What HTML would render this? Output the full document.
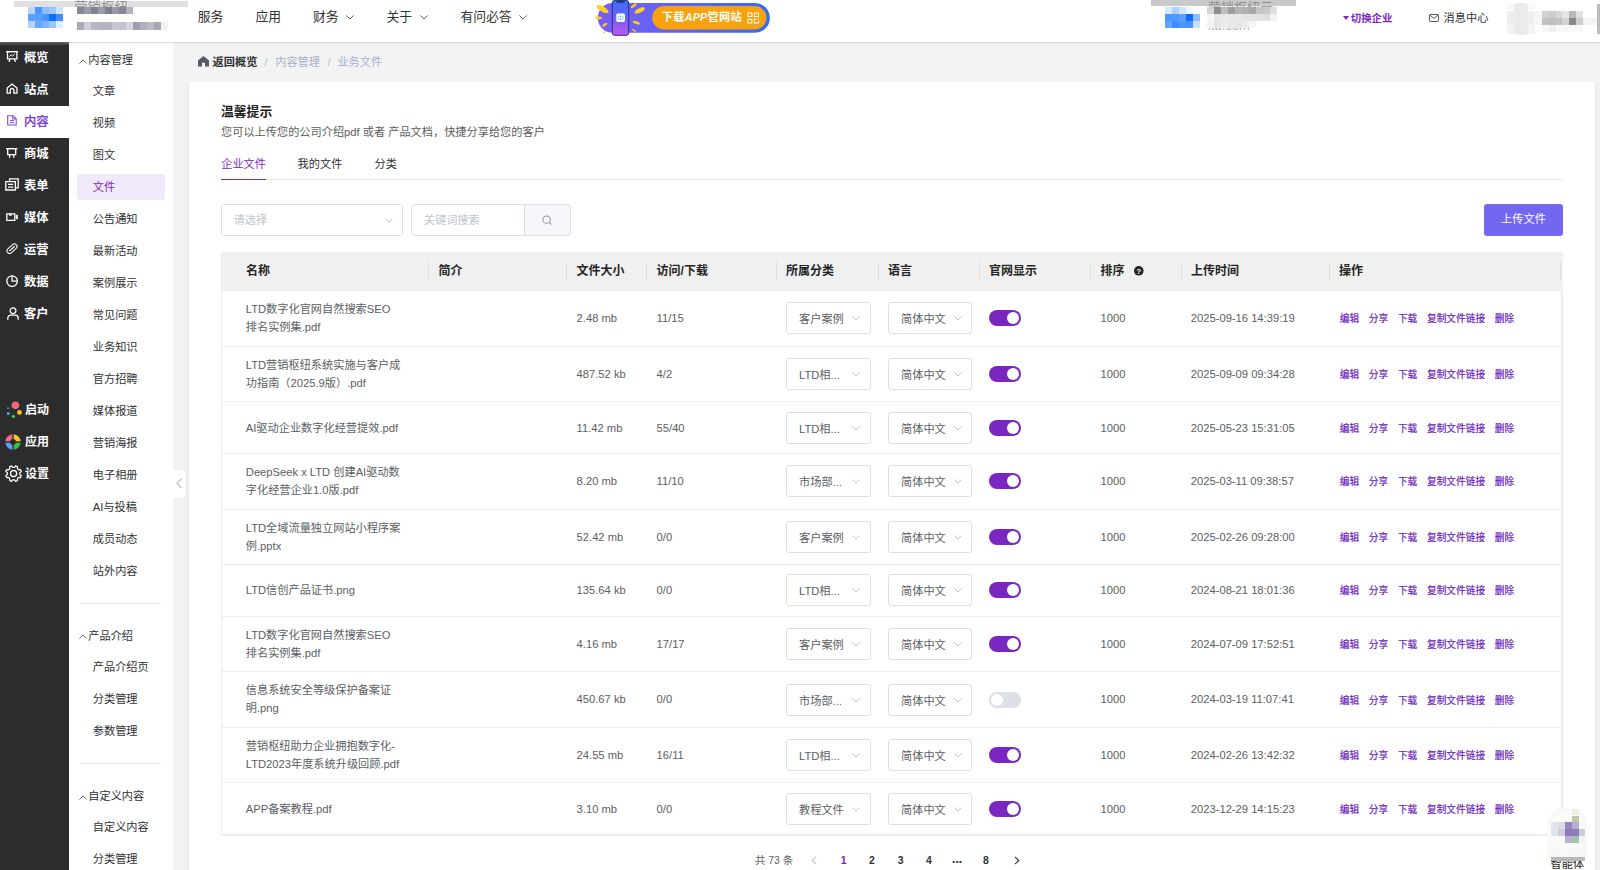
<!DOCTYPE html><html lang="zh-CN"><head><meta charset="utf-8"><title>业务文件</title><style>
*{box-sizing:border-box;margin:0;padding:0}
html,body{width:1600px;height:870px;overflow:hidden;background:#f3f3f3}
body{font-family:"Liberation Sans","Noto Sans CJK SC",sans-serif;font-size:11.2px;color:#5b5e64;position:relative}
.a{position:absolute;white-space:nowrap}
#hdr{position:absolute;left:0;top:0;width:1600px;height:41.6px;background:#fff;box-shadow:0 2px 3px rgba(0,0,0,.03);z-index:5}
#hdr .nav{position:absolute;top:7px;height:20px;line-height:20px;font-size:12.8px;color:#303133;white-space:nowrap}
#side{position:absolute;left:0;top:41.6px;width:68.8px;height:830px;background:#2c2c2c;z-index:3}
#side .it{position:absolute;left:0;width:68.8px;height:32px;line-height:33.4px;color:#fff;font-weight:bold;font-size:12.3px;white-space:nowrap}
#side .it span{position:absolute;left:24px;top:0}
#side .it.on{background:#fff;color:#7434da;font-weight:normal;-webkit-text-stroke:0.35px #7434da}
#side .it svg{position:absolute}
#sub{position:absolute;left:68.8px;top:41.6px;width:104px;height:830px;background:#fff;z-index:2}
#sub .g,#sub .i{position:absolute;white-space:nowrap;color:#303133;font-size:11.2px;line-height:16px;height:16px}
#sub .i{left:24px}
#sub .g{left:19.5px}
#sub .on{color:#7a27c2}
#sub .hl{position:absolute;left:8.2px;width:88px;height:26px;background:#f0e9fa;border-radius:3px}
#sub .dv{position:absolute;left:12px;width:80px;height:1px;background:#e6eaf0}
#card{position:absolute;left:189px;top:82px;width:1406.4px;height:800px;background:#fff;border-radius:3px;box-shadow:0 0 9px rgba(0,0,0,.075)}
.t{position:absolute;white-space:nowrap;line-height:16px;height:16px}
.hd{position:absolute;left:221px;top:252.3px;width:1342px;height:37.9px;background:#f0f0f0}
.hd .t{color:#252525;font-weight:bold;top:11px;font-size:12px}
.hd i{position:absolute;top:9.7px;width:1px;height:19px;background:#dddddd}
.nm{position:absolute;line-height:17.7px;white-space:nowrap;color:#5b5e64}
.c{position:absolute;white-space:nowrap;line-height:16px;height:16px}
.sel{position:absolute;height:32px;width:84px;border:1px solid #dcdfe6;border-radius:3px;background:#fff}
.sel span{position:absolute;left:12px;top:7.5px;line-height:16px;white-space:nowrap}
.sel svg{position:absolute;right:9.4px;top:13px}
.sw{position:absolute;left:989px;width:32px;height:16px;border-radius:8px;background:#7a27c2}
.sw b{position:absolute;right:1.6px;top:1.6px;width:12.8px;height:12.8px;border-radius:50%;background:#fff}
.sw.off{background:#dcdfe6}
.sw.off b{right:auto;left:1.6px}
.lk{position:absolute;left:1339.8px;-webkit-text-stroke:0.2px #6c1fc0;line-height:16px;height:16px;font-size:9.7px;color:#6c1fc0;white-space:nowrap}
.lk span{margin-right:9.7px}
.pg{position:absolute;top:852.8px;line-height:16px;height:16px;font-size:10.4px;font-weight:bold;color:#303133;white-space:nowrap}
</style></head><body>
<div id="hdr"><div class="a" style="left:14px;top:1px;width:174px;height:6px;background:#e0e0e0"></div>
<div class="a" style="left:74px;top:0;width:60px;height:7px;overflow:hidden"><div class="a" style="left:0;top:-0.5px;font-size:13.5px;line-height:16px;color:rgba(70,70,70,.5)">营销枢纽</div></div>
<div class="a" style="left:27.5px;top:7px;width:7px;height:7px;background:#b9d6ff"></div>
<div class="a" style="left:34.5px;top:7px;width:7px;height:7px;background:#4a95ff"></div>
<div class="a" style="left:41.5px;top:7px;width:7px;height:7px;background:#8dbcff"></div>
<div class="a" style="left:48.5px;top:7px;width:7px;height:7px;background:#9cc6ff"></div>
<div class="a" style="left:55.5px;top:7px;width:7px;height:7px;background:#cfe2ff"></div>
<div class="a" style="left:27.5px;top:14px;width:7px;height:7px;background:#5aa0ff"></div>
<div class="a" style="left:34.5px;top:14px;width:7px;height:7px;background:#58a0ff"></div>
<div class="a" style="left:41.5px;top:14px;width:7px;height:7px;background:#4a94ff"></div>
<div class="a" style="left:48.5px;top:14px;width:7px;height:7px;background:#0d6dff"></div>
<div class="a" style="left:55.5px;top:14px;width:7px;height:7px;background:#3f8dff"></div>
<div class="a" style="left:27.5px;top:21px;width:7px;height:7px;background:#b5d3ff"></div>
<div class="a" style="left:34.5px;top:21px;width:7px;height:7px;background:#66a6ff"></div>
<div class="a" style="left:41.5px;top:21px;width:7px;height:7px;background:#7db3ff"></div>
<div class="a" style="left:48.5px;top:21px;width:7px;height:7px;background:#9cc5ff"></div>
<div class="a" style="left:55.5px;top:21px;width:7px;height:7px;background:#e2eeff"></div>
<div class="a" style="left:76.5px;top:7px;width:7px;height:7px;background:#838896"></div>
<div class="a" style="left:83.5px;top:7px;width:7px;height:7px;background:#9a9da8"></div>
<div class="a" style="left:90.5px;top:7px;width:7px;height:7px;background:#80838f"></div>
<div class="a" style="left:97.5px;top:7px;width:7px;height:7px;background:#9b9ea9"></div>
<div class="a" style="left:104.5px;top:7px;width:7px;height:7px;background:#7e818d"></div>
<div class="a" style="left:111.5px;top:7px;width:7px;height:7px;background:#989ba6"></div>
<div class="a" style="left:118.5px;top:7px;width:7px;height:7px;background:#858894"></div>
<div class="a" style="left:125.5px;top:7px;width:7px;height:7px;background:#b0b2ba"></div>
<div class="a" style="left:76.5px;top:22px;width:7px;height:8px;background:#a9a9b7"></div>
<div class="a" style="left:83.5px;top:22px;width:7px;height:8px;background:#cfcfd7"></div>
<div class="a" style="left:90.5px;top:22px;width:7px;height:8px;background:#b9b8c6"></div>
<div class="a" style="left:97.5px;top:22px;width:7px;height:8px;background:#b5b4c2"></div>
<div class="a" style="left:104.5px;top:22px;width:7px;height:8px;background:#b3b2c0"></div>
<div class="a" style="left:111.5px;top:22px;width:7px;height:8px;background:#c6c5d0"></div>
<div class="a" style="left:118.5px;top:22px;width:7px;height:8px;background:#c2c1cd"></div>
<div class="a" style="left:125.5px;top:22px;width:7px;height:8px;background:#d6d5de"></div>
<div class="a" style="left:132.5px;top:22px;width:7px;height:8px;background:#9f9eb0"></div>
<div class="a" style="left:139.5px;top:22px;width:7px;height:8px;background:#b1b0bf"></div>
<div class="a" style="left:146.5px;top:22px;width:7px;height:8px;background:#bbbac7"></div>
<div class="a" style="left:153.5px;top:22px;width:7px;height:8px;background:#a7a6b7"></div>
<div class="a" style="left:160.5px;top:22px;width:7px;height:8px;background:#f1f1f4"></div>
<div class="nav" style="left:197.8px">服务</div>
<div class="nav" style="left:255.5px">应用</div>
<div class="nav" style="left:312.9px">财务<span style="display:inline-block;position:relative;left:7.5px;top:-1.4px"><svg style="display:block;" width="8" height="5" viewBox="0 0 8 5" fill="none" stroke="#606266" stroke-width="1" stroke-linecap="round" stroke-linejoin="round"><path d="M0.7 0.7 L4 4 L7.3 0.7"/></svg></span></div>
<div class="nav" style="left:386.5px">关于<span style="display:inline-block;position:relative;left:7.5px;top:-1.4px"><svg style="display:block;" width="8" height="5" viewBox="0 0 8 5" fill="none" stroke="#606266" stroke-width="1" stroke-linecap="round" stroke-linejoin="round"><path d="M0.7 0.7 L4 4 L7.3 0.7"/></svg></span></div>
<div class="nav" style="left:460.4px">有问必答<span style="display:inline-block;position:relative;left:7.5px;top:-1.4px"><svg style="display:block;" width="8" height="5" viewBox="0 0 8 5" fill="none" stroke="#606266" stroke-width="1" stroke-linecap="round" stroke-linejoin="round"><path d="M0.7 0.7 L4 4 L7.3 0.7"/></svg></span></div>
<svg class="a" style="left:594px;top:0" width="180" height="40" viewBox="0 0 180 40"><defs><linearGradient id="bg1" x1="0" x2="1" y1="0" y2="0"><stop offset="0" stop-color="#7b5cf5"/><stop offset="0.45" stop-color="#5f63f6"/><stop offset="1" stop-color="#2f6df6"/></linearGradient><linearGradient id="ph" x1="0" x2="0" y1="0" y2="1"><stop offset="0" stop-color="#3a6ff8"/><stop offset="0.5" stop-color="#6a62f7"/><stop offset="1" stop-color="#c054f6"/></linearGradient></defs><rect x="3.8" y="3" width="172" height="29.8" rx="14.9" fill="url(#bg1)"/><rect x="58.2" y="6.1" width="114.2" height="23.3" rx="11.65" fill="#f9a20e"/><ellipse cx="8.5" cy="9" rx="6.8" ry="2.6" transform="rotate(30 8.5 9)" fill="#ffd21a"/><ellipse cx="4.4" cy="17.9" rx="3.6" ry="1.3" transform="rotate(5 4.4 17.9)" fill="#ffd21a"/><ellipse cx="10.7" cy="24.8" rx="3" ry="1.2" transform="rotate(-30 10.7 24.8)" fill="#ffd21a"/><ellipse cx="10" cy="32.5" rx="1.6" ry="0.6" transform="rotate(-45 10 32.5)" fill="#ffd21a"/><ellipse cx="39.8" cy="5.8" rx="3.4" ry="1.2" transform="rotate(-35 39.8 5.8)" fill="#ffd21a"/><ellipse cx="45.7" cy="10.4" rx="5.6" ry="2.2" transform="rotate(-25 45.7 10.4)" fill="#ffd21a"/><ellipse cx="42.3" cy="22.6" rx="3.8" ry="1.4" transform="rotate(20 42.3 22.6)" fill="#ffd21a"/><ellipse cx="40" cy="30.4" rx="2.3" ry="0.8" transform="rotate(30 40 30.4)" fill="#ffd21a"/><rect x="18.3" y="0.4" width="16.4" height="34.9" rx="2.6" fill="url(#ph)" stroke="#27327f" stroke-width="1"/><path d="M22.5 0.8H30.5V1.6Q30.5 2.8 29.3 2.8H23.7Q22.5 2.8 22.5 1.6Z" fill="#27327f"/><rect x="22.3" y="13.6" width="8.6" height="8.4" rx="1.4" fill="#fff"/><rect x="24" y="16.2" width="5.2" height="3.2" rx="0.8" fill="none" stroke="#5aa7f5" stroke-width="0.6"/><path d="M26.6 16.2V19.4" stroke="#5aa7f5" stroke-width="0.6"/><text x="67.8" y="21.4" font-family="Liberation Sans,Noto Sans CJK SC,sans-serif" font-size="11.2" font-weight="bold" fill="#fff" letter-spacing="0.3">下载<tspan font-style="italic" font-size="10.6">APP</tspan>管网站</text><g fill="none" stroke="#fff" stroke-width="1"><rect x="153.9" y="13" width="4" height="3.6"/><rect x="160.4" y="13" width="4" height="3.6"/><rect x="153.9" y="19.4" width="4" height="3.6"/><path d="M160 19.2H162.2M163.6 19.2H165M160.4 19V23.2M160 22.9H165M164.6 21V23.2"/></g></svg>
<div class="a" style="left:1208px;top:18.6px;font-size:13px;color:#b4b4b4;line-height:14px">ltd.com</div>
<div class="a" style="left:1151px;top:0;width:145px;height:6px;background:#c9c9c9"></div>
<div class="a" style="left:1208px;top:0;width:70px;height:6.5px;overflow:hidden"><div class="a" style="left:0;top:-0.5px;font-size:13px;line-height:16px;color:rgba(60,60,60,.45)">营销枢纽云</div></div>
<div class="a" style="left:1164.5px;top:6.5px;width:7px;height:7px;background:#d9e8ff"></div>
<div class="a" style="left:1171.5px;top:6.5px;width:7px;height:7px;background:#aecfff"></div>
<div class="a" style="left:1178.5px;top:6.5px;width:7px;height:7px;background:#d3e4ff"></div>
<div class="a" style="left:1185.5px;top:6.5px;width:7px;height:7px;background:#eef5ff"></div>
<div class="a" style="left:1192.5px;top:6.5px;width:7px;height:7px;background:#ffffff"></div>
<div class="a" style="left:1164.5px;top:13.5px;width:7px;height:7px;background:#4b96ff"></div>
<div class="a" style="left:1171.5px;top:13.5px;width:7px;height:7px;background:#4f98ff"></div>
<div class="a" style="left:1178.5px;top:13.5px;width:7px;height:7px;background:#5a9fff"></div>
<div class="a" style="left:1185.5px;top:13.5px;width:7px;height:7px;background:#0d6dff"></div>
<div class="a" style="left:1192.5px;top:13.5px;width:7px;height:7px;background:#8ebcff"></div>
<div class="a" style="left:1164.5px;top:20.5px;width:7px;height:7px;background:#62a4ff"></div>
<div class="a" style="left:1171.5px;top:20.5px;width:7px;height:7px;background:#3d8dff"></div>
<div class="a" style="left:1178.5px;top:20.5px;width:7px;height:7px;background:#4e97ff"></div>
<div class="a" style="left:1185.5px;top:20.5px;width:7px;height:7px;background:#4a94ff"></div>
<div class="a" style="left:1192.5px;top:20.5px;width:7px;height:7px;background:#c8deff"></div>
<div class="a" style="left:1206.5px;top:6.5px;width:7px;height:7px;background:#d5d5d5"></div>
<div class="a" style="left:1213.5px;top:6.5px;width:7px;height:7px;background:#8d8d8d"></div>
<div class="a" style="left:1220.5px;top:6.5px;width:7px;height:7px;background:#bdbdbd"></div>
<div class="a" style="left:1227.5px;top:6.5px;width:7px;height:7px;background:#9e9e9e"></div>
<div class="a" style="left:1234.5px;top:6.5px;width:7px;height:7px;background:#b5b5b5"></div>
<div class="a" style="left:1241.5px;top:6.5px;width:7px;height:7px;background:#b0b0b0"></div>
<div class="a" style="left:1248.5px;top:6.5px;width:7px;height:7px;background:#a8a8a8"></div>
<div class="a" style="left:1255.5px;top:6.5px;width:7px;height:7px;background:#c4c4c4"></div>
<div class="a" style="left:1262.5px;top:6.5px;width:7px;height:7px;background:#c9c9c9"></div>
<div class="a" style="left:1269.5px;top:6.5px;width:7px;height:7px;background:#dedede"></div>
<div class="a" style="left:1206.5px;top:13.5px;width:7px;height:7px;background:#f6f6f6"></div>
<div class="a" style="left:1213.5px;top:13.5px;width:7px;height:7px;background:#e6e6e6"></div>
<div class="a" style="left:1220.5px;top:13.5px;width:7px;height:7px;background:#e9e9e9"></div>
<div class="a" style="left:1227.5px;top:13.5px;width:7px;height:7px;background:#e7e7e7"></div>
<div class="a" style="left:1234.5px;top:13.5px;width:7px;height:7px;background:#e8e8e8"></div>
<div class="a" style="left:1241.5px;top:13.5px;width:7px;height:7px;background:#e3e3e3"></div>
<div class="a" style="left:1248.5px;top:13.5px;width:7px;height:7px;background:#e4e4e4"></div>
<div class="a" style="left:1255.5px;top:13.5px;width:7px;height:7px;background:#e2e2e2"></div>
<div class="a" style="left:1262.5px;top:13.5px;width:7px;height:7px;background:#dfdfdf"></div>
<div class="a" style="left:1269.5px;top:13.5px;width:7px;height:7px;background:#f0f0f0"></div>
<div class="a" style="left:1206.5px;top:20.5px;width:7px;height:7px;background:#f2f2f2"></div>
<div class="a" style="left:1213.5px;top:20.5px;width:7px;height:7px;background:#e5e5e5"></div>
<div class="a" style="left:1220.5px;top:20.5px;width:7px;height:7px;background:#ebebeb"></div>
<div class="a" style="left:1227.5px;top:20.5px;width:7px;height:7px;background:#e9e9e9"></div>
<div class="a" style="left:1234.5px;top:20.5px;width:7px;height:7px;background:#e6e6e6"></div>
<div class="a" style="left:1241.5px;top:20.5px;width:7px;height:7px;background:#ececec"></div>
<div class="a" style="left:1248.5px;top:20.5px;width:7px;height:7px;background:#f5f5f5"></div>
<svg class="a" style="left:1342.6px;top:16px" width="6" height="4" viewBox="0 0 6 4"><path d="M0 0H6L3 4Z" fill="#7a27c2"/></svg>
<div class="a" style="left:1350.8px;top:10.6px;line-height:16px;font-size:10.4px;font-weight:bold;color:#7a27c2">切换企业</div>
<svg class="a" style="left:1429px;top:14px" width="10" height="8" viewBox="0 0 10 8" fill="none" stroke="#444" stroke-width="0.9"><rect x="0.5" y="0.5" width="9" height="7" rx="0.8"/><path d="M1 1.2L5 4.4L9 1.2"/></svg>
<div class="a" style="left:1443.6px;top:9.6px;line-height:16px;font-size:11.2px;color:#303133">消息中心</div>
<div class="a" style="left:1513.5px;top:3px;width:14.2px;height:31.5px;border-radius:7px/2px;background:#ebebeb"></div><div class="a" style="left:1506.8px;top:3.9px;width:7px;height:6.6px;background:#f8f8f8"></div><div class="a" style="left:1506.8px;top:10.5px;width:7px;height:14.1px;background:#eeeeee"></div><div class="a" style="left:1506.8px;top:24.6px;width:7px;height:9.4px;background:#f3f3f3"></div><div class="a" style="left:1527.5px;top:3.9px;width:7px;height:6.6px;background:#f8f8f8"></div><div class="a" style="left:1527.5px;top:10.5px;width:7px;height:14.1px;background:#eeeeee"></div><div class="a" style="left:1527.5px;top:24.6px;width:7px;height:9.4px;background:#f3f3f3"></div>
<div class="a" style="left:1534.4px;top:10.5px;width:7.2px;height:14px;background:#f6f6f6"></div>
<div class="a" style="left:1541.6px;top:10.5px;width:7px;height:7px;background:#d0d2d1"></div>
<div class="a" style="left:1548.5px;top:10.5px;width:7px;height:7px;background:#cbcbcb"></div>
<div class="a" style="left:1555.5px;top:10.5px;width:7px;height:7px;background:#d6d8d7"></div>
<div class="a" style="left:1562.4px;top:10.5px;width:7px;height:7px;background:#e6e6e6"></div>
<div class="a" style="left:1569.4px;top:10.5px;width:7px;height:7px;background:#b9b9b9"></div>
<div class="a" style="left:1576.3px;top:10.5px;width:7px;height:7px;background:#e0e0e0"></div>
<div class="a" style="left:1541.6px;top:17.5px;width:7px;height:7px;background:#c0c1c1"></div>
<div class="a" style="left:1548.5px;top:17.5px;width:7px;height:7px;background:#bfbfbf"></div>
<div class="a" style="left:1555.5px;top:17.5px;width:7px;height:7px;background:#c1c3c2"></div>
<div class="a" style="left:1562.4px;top:17.5px;width:7px;height:7px;background:#d4d4d4"></div>
<div class="a" style="left:1569.4px;top:17.5px;width:7px;height:7px;background:#87898c"></div>
<div class="a" style="left:1576.3px;top:17.5px;width:7px;height:7px;background:#cdcdcd"></div>
<div class="a" style="left:1541.6px;top:24.5px;width:7px;height:7px;background:#f6f6f6"></div>
<div class="a" style="left:1548.5px;top:24.5px;width:7px;height:7px;background:#f0f0f0"></div>
<div class="a" style="left:1555.5px;top:24.5px;width:7px;height:7px;background:#f8f8f8"></div>
<div class="a" style="left:1562.4px;top:24.5px;width:7px;height:7px;background:#f6f6f6"></div>
<div class="a" style="left:1569.4px;top:24.5px;width:7px;height:7px;background:#f8f8f8"></div>
<div class="a" style="left:1576.3px;top:24.5px;width:7px;height:7px;background:#f8f8f8"></div>
<div class="a" style="left:1583.3px;top:17.6px;width:14px;height:7px;background:#f4f4f6"></div>
<div class="a" style="left:1597.4px;top:3.8px;width:3px;height:30px;background:#bcbcbc"></div>
<div class="a" style="left:68.8px;top:42px;width:1532px;height:1px;background:rgba(190,193,205,.5)"></div></div>
<div id="side"><div class="a" style="left:0;top:0;width:68.8px;height:4px;background:linear-gradient(#66686d,#2c2c2c)"></div>
<div class="it" style="top:0.1px"><svg style="left:5.9px;top:9.2px" width="12.4" height="11.2" viewBox="0 0 12.4 11.2" fill="none" ><g stroke="#fff" stroke-width="1.3" stroke-linejoin="miter"><path d="M0 0.7H12.4" stroke-width="1.4"/><path d="M1.5 0.7V7.9H10.9V0.7"/><path d="M4 8L3 11M8.4 8L9.4 11"/><path d="M3.4 5.6L5.2 3.9L6.6 5L8.9 2.9" stroke-width="1"/></g></svg><span>概览</span></div>
<div class="it" style="top:32.1px"><svg style="left:5.8px;top:9.3px" width="12.2" height="11" viewBox="0 0 12.2 11" fill="none" ><path d="M1.2 10.2V5L6.1 1L11 5V10.2H7.9V7.2A1.8 1.8 0 0 0 4.3 7.2V10.2Z" stroke="#fff" stroke-width="1.3" stroke-linejoin="miter"/></svg><span>站点</span></div>
<div class="it on" style="top:64.1px"><svg style="left:7.1px;top:9.4px" width="10" height="10.8" viewBox="0 0 10 10.8" fill="none" ><g stroke="#8146e2" stroke-width="1.1"><path d="M0.7 0.7H6L9.2 3.8V10H0.7Z"/><path d="M5.8 0.9V4H9" /><path d="M2.8 5.6H7M2.8 7.7H7" stroke-width="1"/></g></svg><span>内容</span></div>
<div class="it" style="top:96.1px"><svg style="left:6.4px;top:10.1px" width="11.4" height="10.2" viewBox="0 0 11.4 10.2" fill="none" ><g stroke="#fff" stroke-width="1.3" stroke-linejoin="miter"><path d="M0 0.7H11.4" stroke-width="1.4"/><path d="M1.7 0.7V6.6H9.7V0.7"/><path d="M3.6 6.6V9.8M7.8 6.6V9.8" stroke-width="1.3"/></g></svg><span>商城</span></div>
<div class="it" style="top:128.1px"><svg style="left:4.9px;top:8.3px" width="14" height="12.9" viewBox="0 0 14 12.9" fill="none" ><g stroke="#fff" stroke-width="1.3" stroke-linejoin="miter" stroke-width="1.4"><path d="M0.8 3.6H10.4V12H0.8Z"/><path d="M4.6 3.4V0.8H13.2V9.8H10.6"/><path d="M3 6.4H8.2M3 9.1H8.2" stroke-width="1.2"/></g></svg><span>表单</span></div>
<div class="it" style="top:160.1px"><svg style="left:5.8px;top:11.3px" width="12.2" height="8.2" viewBox="0 0 12.2 8.2" fill="none" ><g stroke="#fff" stroke-width="1.3" stroke-linejoin="miter" stroke-width="1.4"><path d="M0.8 0.8H8.8V7.3H0.8Z"/></g><path d="M3.2 0.8H5.6V2.8H3.2Z" fill="#fff"/><path d="M9.8 2.6L11.8 1.3V6.8L9.8 5.5Z" fill="#fff"/></svg><span>媒体</span></div>
<div class="it" style="top:192.1px"><svg style="left:5.8px;top:9.6px" width="12" height="11.4" viewBox="0 0 12 11.4" fill="none" ><g transform="rotate(-42 6 5.7)" stroke="#fff" stroke-width="1"><rect x="0.2" y="3.1" width="11.6" height="5.2" rx="2.6"/><path d="M2.4 5.7H9.6" stroke-width="1.2"/></g></svg><span>运营</span></div>
<div class="it" style="top:224.1px"><svg style="left:5.9px;top:9px" width="12.4" height="12.2" viewBox="0 0 12.4 12.2" fill="none" ><g stroke="#fff" stroke-width="1.3" stroke-linejoin="miter"><circle cx="6.1" cy="6.1" r="5.3"/><path d="M6.1 0.8V6.1H11.4"/></g></svg><span>数据</span></div>
<div class="it" style="top:256.1px"><svg style="left:7.4px;top:9.5px" width="12" height="12.8" viewBox="0 0 12 12.8" fill="none" ><g stroke="#fff" stroke-width="1.3" stroke-linejoin="miter" stroke-width="1.4"><circle cx="6" cy="3.7" r="2.9"/><path d="M0.8 12.8V11.2A3 3 0 0 1 3.8 8.2H8.2A3 3 0 0 1 11.2 11.2V12.8"/></g></svg><span>客户</span></div>
<div class="it" style="top:352.1px"><svg style="left:5.8px;top:7.5px" width="17" height="18" viewBox="0 0 17 18" fill="none" ><circle cx="9.4" cy="4.3" r="3.8" fill="#f8657a"/><circle cx="13.5" cy="11.4" r="2.4" fill="#fcc419"/><circle cx="7.4" cy="15.4" r="1.7" fill="#37c55a"/><circle cx="2.2" cy="12.4" r="1.5" fill="#5b9bf8"/><circle cx="2" cy="7.2" r="0.9" fill="#22b8e8"/></svg><span style="left:25px;top:0.6px;font-size:12px">启动</span></div>
<div class="it" style="top:384.1px"><svg style="left:5.3px;top:8.6px" width="16" height="16" viewBox="0 0 16 16" fill="none" ><path d="M8.67 0.33A7.7 7.7 0 0 1 15.67 7.33L10.92 7.33A3.0 3.0 0 0 0 8.67 5.08Z" fill="#fbc02d"/><path d="M15.67 8.67A7.7 7.7 0 0 1 8.67 15.67L8.67 10.92A3.0 3.0 0 0 0 10.92 8.67Z" fill="#2fc14b"/><path d="M7.33 15.67A7.7 7.7 0 0 1 0.33 8.67L5.08 8.67A3.0 3.0 0 0 0 7.33 10.92Z" fill="#5c9dff"/><path d="M0.33 7.33A7.7 7.7 0 0 1 7.33 0.33L7.33 5.08A3.0 3.0 0 0 0 5.08 7.33Z" fill="#f26d7d"/></svg><span style="left:25px;top:0.6px;font-size:12px">应用</span></div>
<div class="it" style="top:416.1px"><svg style="left:4.6px;top:7.4px" width="17.2" height="17.2" viewBox="0 0 17.2 17.2" fill="none" ><path d="M14.83 9.53L16.35 10.60L15.49 12.66L13.66 12.35L12.35 13.66L12.66 15.49L10.60 16.35L9.53 14.83L7.67 14.83L6.60 16.35L4.54 15.49L4.85 13.66L3.54 12.35L1.71 12.66L0.85 10.60L2.37 9.53L2.37 7.67L0.85 6.60L1.71 4.54L3.54 4.85L4.85 3.54L4.54 1.71L6.60 0.85L7.67 2.37L9.53 2.37L10.60 0.85L12.66 1.71L12.35 3.54L13.66 4.85L15.49 4.54L16.35 6.60L14.83 7.67Z" stroke="#fff" stroke-width="1.2" stroke-linejoin="round"/><circle cx="8.6" cy="8.6" r="3.1" stroke="#fff" stroke-width="1.3"/></svg><span style="left:25px;top:0.6px;font-size:12px">设置</span></div></div>
<div id="sub"><div class="a" style="left:9.8px;top:17.0px"><svg style="display:block;" width="8" height="5" viewBox="0 0 8 5" fill="none" stroke="#606266" stroke-width="0.9" stroke-linecap="round" stroke-linejoin="round"><path d="M0.7 4.3 L4 1 L7.3 4.3"/></svg></div>
<div class="g" style="top:10.7px">内容管理</div>
<div class="i" style="top:41.5px">文章</div>
<div class="i" style="top:73.5px">视频</div>
<div class="i" style="top:105.5px">图文</div>
<div class="hl" style="top:132.5px"></div>
<div class="i on" style="top:137.5px">文件</div>
<div class="i" style="top:169.5px">公告通知</div>
<div class="i" style="top:201.5px">最新活动</div>
<div class="i" style="top:233.5px">案例展示</div>
<div class="i" style="top:265.5px">常见问题</div>
<div class="i" style="top:297.5px">业务知识</div>
<div class="i" style="top:329.5px">官方招聘</div>
<div class="i" style="top:361.5px">媒体报道</div>
<div class="i" style="top:393.5px">营销海报</div>
<div class="i" style="top:425.5px">电子相册</div>
<div class="i" style="top:457.5px">AI与投稿</div>
<div class="i" style="top:489.5px">成员动态</div>
<div class="i" style="top:521.5px">站外内容</div>
<div class="dv" style="top:561.4px"></div>
<div class="a" style="left:9.8px;top:592.8px"><svg style="display:block;" width="8" height="5" viewBox="0 0 8 5" fill="none" stroke="#606266" stroke-width="0.9" stroke-linecap="round" stroke-linejoin="round"><path d="M0.7 4.3 L4 1 L7.3 4.3"/></svg></div>
<div class="g" style="top:586.5px">产品介绍</div>
<div class="i" style="top:617.5px">产品介绍页</div>
<div class="i" style="top:649.5px">分类管理</div>
<div class="i" style="top:681.5px">参数管理</div>
<div class="dv" style="top:721.4px"></div>
<div class="a" style="left:9.8px;top:753.2px"><svg style="display:block;" width="8" height="5" viewBox="0 0 8 5" fill="none" stroke="#606266" stroke-width="0.9" stroke-linecap="round" stroke-linejoin="round"><path d="M0.7 4.3 L4 1 L7.3 4.3"/></svg></div>
<div class="g" style="top:746.9px">自定义内容</div>
<div class="i" style="top:777.7px">自定义内容</div>
<div class="i" style="top:809.7px">分类管理</div></div>
<div class="a" style="left:172.8px;top:469.6px;width:12.4px;height:28px;background:#fff;border-radius:0 3px 3px 0;z-index:2"><svg class="a" style="left:3px;top:8.2px" width="6.4" height="11" viewBox="0 0 6.4 11" fill="none" stroke="#c2c2c2" stroke-width="1.3"><path d="M5.6 0.6L0.9 5.3L5.6 10"/></svg></div>
<svg class="a" style="left:197.6px;top:56px" width="11" height="10.5" viewBox="0 0 11 10.5"><path d="M5.5 0L11 4.6V10.5H7V6.8H4V10.5H0V4.6Z" fill="#565a66"/></svg>
<div class="t" style="left:212.6px;top:53.8px;font-weight:bold;color:#303133">返回概览</div>
<div class="t" style="left:264.6px;top:53.8px;color:#b8bec9">/</div>
<div class="t" style="left:275.2px;top:53.8px;color:#a6b2c8">内容管理</div>
<div class="t" style="left:327.4px;top:53.8px;color:#b8bec9">/</div>
<div class="t" style="left:337.4px;top:53.8px;color:#a6b2c8">业务文件</div>
<div id="card"></div>
<div class="a" style="left:173px;top:68px;width:1427px;height:14px;background:#f3f3f3"></div>
<div class="t" style="left:221px;top:103.6px;font-size:12.8px;font-weight:bold;color:#1f1f1f">温馨提示</div>
<div class="t" style="left:221px;top:123.8px;color:#5c5c5c">您可以上传您的公司介绍pdf 或者 产品文档，快捷分享给您的客户</div>
<div class="t" style="left:221.2px;top:155.8px;color:#7a27c2">企业文件</div>
<div class="t" style="left:297.6px;top:155.8px;color:#303133">我的文件</div>
<div class="t" style="left:374.6px;top:155.8px;color:#303133">分类</div>
<div class="a" style="left:221px;top:179.4px;width:1342px;height:1px;background:#e4e7ed"></div>
<div class="a" style="left:221.2px;top:178.8px;width:45px;height:1.6px;background:#7a27c2"></div>
<div class="a" style="left:221px;top:204px;width:182px;height:32px;border:1px solid #dcdfe6;border-radius:3px;background:#fff"><div class="t" style="left:11.6px;top:7.4px;color:#c0c4cc">请选择</div><span class="a" style="right:9.2px;top:13.4px;line-height:0"><svg style="display:block;" width="8" height="5" viewBox="0 0 8 5" fill="none" stroke="#c0c4cc" stroke-width="1" stroke-linecap="round" stroke-linejoin="round"><path d="M0.7 0.7 L4 4 L7.3 0.7"/></svg></span></div>
<div class="a" style="left:411px;top:204px;width:114px;height:32px;border:1px solid #dcdfe6;border-radius:3px 0 0 3px;background:#fff"><div class="t" style="left:11.8px;top:7.4px;color:#c0c4cc">关键词搜索</div></div>
<div class="a" style="left:524px;top:204px;width:47px;height:32px;border:1px solid #dcdfe6;border-radius:0 3px 3px 0;background:#f5f7fa"><svg class="a" style="left:17px;top:10px" width="10.2" height="10.2" viewBox="0 0 11 11" fill="none" stroke="#909399" stroke-width="1.1"><circle cx="5" cy="5" r="4"/><path d="M8 8L10 10" stroke-linecap="round"/></svg></div>
<div class="a" style="left:1484px;top:204px;width:79px;height:32px;border-radius:3px;background:#7367f0;color:#fff;text-align:center;line-height:30.6px;font-size:11.2px">上传文件</div>
<div class="hd"><div class="t" style="left:25.0px">名称</div><div class="t" style="left:217.4px">简介</div><div class="t" style="left:355.6px">文件大小</div><div class="t" style="left:435.6px">访问/下载</div><div class="t" style="left:565.0px">所属分类</div><div class="t" style="left:667.0px">语言</div><div class="t" style="left:768.0px">官网显示</div><div class="t" style="left:879.4px">排序</div><div class="t" style="left:970.0px">上传时间</div><div class="t" style="left:1118.0px">操作</div><i style="left:207.0px"></i><i style="left:345.0px"></i><i style="left:425.0px"></i><i style="left:555.0px"></i><i style="left:657.0px"></i><i style="left:758.0px"></i><i style="left:869.0px"></i><i style="left:960.0px"></i><i style="left:1108.0px"></i><i style="left:1339.0px"></i><svg class="a" style="left:913px;top:13.8px" width="9.6" height="9.6" viewBox="0 0 9 9"><circle cx="4.5" cy="4.5" r="4.5" fill="#252525"/><text x="4.5" y="7.2" font-size="7" font-weight="bold" fill="#fff" text-anchor="middle" font-family="Liberation Sans,sans-serif">?</text></svg></div>
<div class="a" style="left:221px;top:252px;width:1px;height:583px;background:#ebeef5"></div>
<div class="a" style="left:1561px;top:290px;width:2px;height:545px;background:#eaedf6"></div>
<div class="a" style="left:221px;top:290px;width:1341px;height:1px;background:#ebeef5"></div>
<div class="a" style="left:221px;top:346px;width:1342px;height:1px;background:#ebeef5"></div><div class="nm" style="left:245.8px;top:300.8px">LTD数字化官网自然搜索SEO<br>排名实例集.pdf</div><div class="c" style="left:576.6px;top:310px">2.48 mb</div><div class="c" style="left:656.6px;top:310px">11/15</div><div class="sel" style="left:786px;width:84.7px;top:302px"><span>客户案例</span><svg style="display:block;" width="8" height="5" viewBox="0 0 8 5" fill="none" stroke="#c0c4cc" stroke-width="1" stroke-linecap="round" stroke-linejoin="round"><path d="M0.7 0.7 L4 4 L7.3 0.7"/></svg></div><div class="sel" style="left:888px;top:302px"><span>简体中文</span><svg style="display:block;" width="8" height="5" viewBox="0 0 8 5" fill="none" stroke="#c0c4cc" stroke-width="1" stroke-linecap="round" stroke-linejoin="round"><path d="M0.7 0.7 L4 4 L7.3 0.7"/></svg></div><div class="sw" style="top:310px"><b></b></div><div class="c" style="left:1100.6px;top:310px">1000</div><div class="c" style="left:1190.8px;top:310px">2025-09-16 14:39:19</div><div class="lk" style="top:311.2px"><span>编辑</span><span>分享</span><span>下载</span><span>复制文件链接</span><span>删除</span></div>
<div class="a" style="left:221px;top:401px;width:1342px;height:1px;background:#ebeef5"></div><div class="nm" style="left:245.8px;top:356.8px">LTD营销枢纽系统实施与客户成<br>功指南（2025.9版）.pdf</div><div class="c" style="left:576.6px;top:366px">487.52 kb</div><div class="c" style="left:656.6px;top:366px">4/2</div><div class="sel" style="left:786px;width:84.7px;top:358px"><span>LTD相...</span><svg style="display:block;" width="8" height="5" viewBox="0 0 8 5" fill="none" stroke="#c0c4cc" stroke-width="1" stroke-linecap="round" stroke-linejoin="round"><path d="M0.7 0.7 L4 4 L7.3 0.7"/></svg></div><div class="sel" style="left:888px;top:358px"><span>简体中文</span><svg style="display:block;" width="8" height="5" viewBox="0 0 8 5" fill="none" stroke="#c0c4cc" stroke-width="1" stroke-linecap="round" stroke-linejoin="round"><path d="M0.7 0.7 L4 4 L7.3 0.7"/></svg></div><div class="sw" style="top:366px"><b></b></div><div class="c" style="left:1100.6px;top:366px">1000</div><div class="c" style="left:1190.8px;top:366px">2025-09-09 09:34:28</div><div class="lk" style="top:367.2px"><span>编辑</span><span>分享</span><span>下载</span><span>复制文件链接</span><span>删除</span></div>
<div class="a" style="left:221px;top:453px;width:1342px;height:1px;background:#ebeef5"></div><div class="nm" style="left:245.8px;top:419.6px">AI驱动企业数字化经营提效.pdf</div><div class="c" style="left:576.6px;top:420px">11.42 mb</div><div class="c" style="left:656.6px;top:420px">55/40</div><div class="sel" style="left:786px;width:84.7px;top:412px"><span>LTD相...</span><svg style="display:block;" width="8" height="5" viewBox="0 0 8 5" fill="none" stroke="#c0c4cc" stroke-width="1" stroke-linecap="round" stroke-linejoin="round"><path d="M0.7 0.7 L4 4 L7.3 0.7"/></svg></div><div class="sel" style="left:888px;top:412px"><span>简体中文</span><svg style="display:block;" width="8" height="5" viewBox="0 0 8 5" fill="none" stroke="#c0c4cc" stroke-width="1" stroke-linecap="round" stroke-linejoin="round"><path d="M0.7 0.7 L4 4 L7.3 0.7"/></svg></div><div class="sw" style="top:420px"><b></b></div><div class="c" style="left:1100.6px;top:420px">1000</div><div class="c" style="left:1190.8px;top:420px">2025-05-23 15:31:05</div><div class="lk" style="top:421.2px"><span>编辑</span><span>分享</span><span>下载</span><span>复制文件链接</span><span>删除</span></div>
<div class="a" style="left:221px;top:509px;width:1342px;height:1px;background:#ebeef5"></div><div class="nm" style="left:245.8px;top:463.8px">DeepSeek x LTD 创建AI驱动数<br>字化经营企业1.0版.pdf</div><div class="c" style="left:576.6px;top:473px">8.20 mb</div><div class="c" style="left:656.6px;top:473px">11/10</div><div class="sel" style="left:786px;width:84.7px;top:465px"><span>市场部...</span><svg style="display:block;" width="8" height="5" viewBox="0 0 8 5" fill="none" stroke="#c0c4cc" stroke-width="1" stroke-linecap="round" stroke-linejoin="round"><path d="M0.7 0.7 L4 4 L7.3 0.7"/></svg></div><div class="sel" style="left:888px;top:465px"><span>简体中文</span><svg style="display:block;" width="8" height="5" viewBox="0 0 8 5" fill="none" stroke="#c0c4cc" stroke-width="1" stroke-linecap="round" stroke-linejoin="round"><path d="M0.7 0.7 L4 4 L7.3 0.7"/></svg></div><div class="sw" style="top:473px"><b></b></div><div class="c" style="left:1100.6px;top:473px">1000</div><div class="c" style="left:1190.8px;top:473px">2025-03-11 09:38:57</div><div class="lk" style="top:474.2px"><span>编辑</span><span>分享</span><span>下载</span><span>复制文件链接</span><span>删除</span></div>
<div class="a" style="left:221px;top:564px;width:1342px;height:1px;background:#ebeef5"></div><div class="nm" style="left:245.8px;top:519.8px">LTD全域流量独立网站小程序案<br>例.pptx</div><div class="c" style="left:576.6px;top:529px">52.42 mb</div><div class="c" style="left:656.6px;top:529px">0/0</div><div class="sel" style="left:786px;width:84.7px;top:521px"><span>客户案例</span><svg style="display:block;" width="8" height="5" viewBox="0 0 8 5" fill="none" stroke="#c0c4cc" stroke-width="1" stroke-linecap="round" stroke-linejoin="round"><path d="M0.7 0.7 L4 4 L7.3 0.7"/></svg></div><div class="sel" style="left:888px;top:521px"><span>简体中文</span><svg style="display:block;" width="8" height="5" viewBox="0 0 8 5" fill="none" stroke="#c0c4cc" stroke-width="1" stroke-linecap="round" stroke-linejoin="round"><path d="M0.7 0.7 L4 4 L7.3 0.7"/></svg></div><div class="sw" style="top:529px"><b></b></div><div class="c" style="left:1100.6px;top:529px">1000</div><div class="c" style="left:1190.8px;top:529px">2025-02-26 09:28:00</div><div class="lk" style="top:530.2px"><span>编辑</span><span>分享</span><span>下载</span><span>复制文件链接</span><span>删除</span></div>
<div class="a" style="left:221px;top:616px;width:1342px;height:1px;background:#ebeef5"></div><div class="nm" style="left:245.8px;top:581.6px">LTD信创产品证书.png</div><div class="c" style="left:576.6px;top:582px">135.64 kb</div><div class="c" style="left:656.6px;top:582px">0/0</div><div class="sel" style="left:786px;width:84.7px;top:574px"><span>LTD相...</span><svg style="display:block;" width="8" height="5" viewBox="0 0 8 5" fill="none" stroke="#c0c4cc" stroke-width="1" stroke-linecap="round" stroke-linejoin="round"><path d="M0.7 0.7 L4 4 L7.3 0.7"/></svg></div><div class="sel" style="left:888px;top:574px"><span>简体中文</span><svg style="display:block;" width="8" height="5" viewBox="0 0 8 5" fill="none" stroke="#c0c4cc" stroke-width="1" stroke-linecap="round" stroke-linejoin="round"><path d="M0.7 0.7 L4 4 L7.3 0.7"/></svg></div><div class="sw" style="top:582px"><b></b></div><div class="c" style="left:1100.6px;top:582px">1000</div><div class="c" style="left:1190.8px;top:582px">2024-08-21 18:01:36</div><div class="lk" style="top:583.2px"><span>编辑</span><span>分享</span><span>下载</span><span>复制文件链接</span><span>删除</span></div>
<div class="a" style="left:221px;top:671px;width:1342px;height:1px;background:#ebeef5"></div><div class="nm" style="left:245.8px;top:626.8px">LTD数字化官网自然搜索SEO<br>排名实例集.pdf</div><div class="c" style="left:576.6px;top:636px">4.16 mb</div><div class="c" style="left:656.6px;top:636px">17/17</div><div class="sel" style="left:786px;width:84.7px;top:628px"><span>客户案例</span><svg style="display:block;" width="8" height="5" viewBox="0 0 8 5" fill="none" stroke="#c0c4cc" stroke-width="1" stroke-linecap="round" stroke-linejoin="round"><path d="M0.7 0.7 L4 4 L7.3 0.7"/></svg></div><div class="sel" style="left:888px;top:628px"><span>简体中文</span><svg style="display:block;" width="8" height="5" viewBox="0 0 8 5" fill="none" stroke="#c0c4cc" stroke-width="1" stroke-linecap="round" stroke-linejoin="round"><path d="M0.7 0.7 L4 4 L7.3 0.7"/></svg></div><div class="sw" style="top:636px"><b></b></div><div class="c" style="left:1100.6px;top:636px">1000</div><div class="c" style="left:1190.8px;top:636px">2024-07-09 17:52:51</div><div class="lk" style="top:637.2px"><span>编辑</span><span>分享</span><span>下载</span><span>复制文件链接</span><span>删除</span></div>
<div class="a" style="left:221px;top:727px;width:1342px;height:1px;background:#ebeef5"></div><div class="nm" style="left:245.8px;top:682.1px">信息系统安全等级保护备案证<br>明.png</div><div class="c" style="left:576.6px;top:691.3px">450.67 kb</div><div class="c" style="left:656.6px;top:691.3px">0/0</div><div class="sel" style="left:786px;width:84.7px;top:684px"><span>市场部...</span><svg style="display:block;" width="8" height="5" viewBox="0 0 8 5" fill="none" stroke="#c0c4cc" stroke-width="1" stroke-linecap="round" stroke-linejoin="round"><path d="M0.7 0.7 L4 4 L7.3 0.7"/></svg></div><div class="sel" style="left:888px;top:684px"><span>简体中文</span><svg style="display:block;" width="8" height="5" viewBox="0 0 8 5" fill="none" stroke="#c0c4cc" stroke-width="1" stroke-linecap="round" stroke-linejoin="round"><path d="M0.7 0.7 L4 4 L7.3 0.7"/></svg></div><div class="sw off" style="top:692px"><b></b></div><div class="c" style="left:1100.6px;top:691.3px">1000</div><div class="c" style="left:1190.8px;top:691.3px">2024-03-19 11:07:41</div><div class="lk" style="top:692.5px"><span>编辑</span><span>分享</span><span>下载</span><span>复制文件链接</span><span>删除</span></div>
<div class="a" style="left:221px;top:782px;width:1342px;height:1px;background:#ebeef5"></div><div class="nm" style="left:245.8px;top:737.8px">营销枢纽助力企业拥抱数字化-<br>LTD2023年度系统升级回顾.pdf</div><div class="c" style="left:576.6px;top:747px">24.55 mb</div><div class="c" style="left:656.6px;top:747px">16/11</div><div class="sel" style="left:786px;width:84.7px;top:739px"><span>LTD相...</span><svg style="display:block;" width="8" height="5" viewBox="0 0 8 5" fill="none" stroke="#c0c4cc" stroke-width="1" stroke-linecap="round" stroke-linejoin="round"><path d="M0.7 0.7 L4 4 L7.3 0.7"/></svg></div><div class="sel" style="left:888px;top:739px"><span>简体中文</span><svg style="display:block;" width="8" height="5" viewBox="0 0 8 5" fill="none" stroke="#c0c4cc" stroke-width="1" stroke-linecap="round" stroke-linejoin="round"><path d="M0.7 0.7 L4 4 L7.3 0.7"/></svg></div><div class="sw" style="top:747px"><b></b></div><div class="c" style="left:1100.6px;top:747px">1000</div><div class="c" style="left:1190.8px;top:747px">2024-02-26 13:42:32</div><div class="lk" style="top:748.2px"><span>编辑</span><span>分享</span><span>下载</span><span>复制文件链接</span><span>删除</span></div>
<div class="a" style="left:221px;top:834px;width:1342px;height:1.6px;background:#ebeef5"></div><div class="nm" style="left:245.8px;top:800.6px">APP备案教程.pdf</div><div class="c" style="left:576.6px;top:801px">3.10 mb</div><div class="c" style="left:656.6px;top:801px">0/0</div><div class="sel" style="left:786px;width:84.7px;top:793px"><span>教程文件</span><svg style="display:block;" width="8" height="5" viewBox="0 0 8 5" fill="none" stroke="#c0c4cc" stroke-width="1" stroke-linecap="round" stroke-linejoin="round"><path d="M0.7 0.7 L4 4 L7.3 0.7"/></svg></div><div class="sel" style="left:888px;top:793px"><span>简体中文</span><svg style="display:block;" width="8" height="5" viewBox="0 0 8 5" fill="none" stroke="#c0c4cc" stroke-width="1" stroke-linecap="round" stroke-linejoin="round"><path d="M0.7 0.7 L4 4 L7.3 0.7"/></svg></div><div class="sw" style="top:801px"><b></b></div><div class="c" style="left:1100.6px;top:801px">1000</div><div class="c" style="left:1190.8px;top:801px">2023-12-29 14:15:23</div><div class="lk" style="top:802.2px"><span>编辑</span><span>分享</span><span>下载</span><span>复制文件链接</span><span>删除</span></div>
<div class="pg" style="left:755px;font-weight:normal;color:#606266">共 73 条</div>
<svg class="a" style="left:810.5px;top:855.5px" width="6" height="9" viewBox="0 0 6 9" fill="none" stroke="#c0c4cc" stroke-width="1.1"><path d="M5 0.8L1.2 4.5L5 8.2"/></svg>
<div class="pg" style="left:833.6px;width:20px;text-align:center;color:#7a27c2">1</div>
<div class="pg" style="left:862px;width:20px;text-align:center;color:#303133">2</div>
<div class="pg" style="left:890.6px;width:20px;text-align:center;color:#303133">3</div>
<div class="pg" style="left:919px;width:20px;text-align:center;color:#303133">4</div>
<div class="pg" style="left:976px;width:20px;text-align:center;color:#303133">8</div>
<div class="pg" style="left:947.4px;width:20px;text-align:center;top:852.6px;letter-spacing:0.3px"><span style="font-size:8px;letter-spacing:0.6px;position:relative;top:0.5px">•••</span></div>
<svg class="a" style="left:1014px;top:855.5px" width="6" height="9" viewBox="0 0 6 9" fill="none" stroke="#303133" stroke-width="1.1"><path d="M1 0.8L4.8 4.5L1 8.2"/></svg>
<div style="position:absolute;left:0;top:0;z-index:6"><div class="a" style="left:1547px;top:808px;width:40px;height:58px;background:#f7f7f7;border-radius:16px;opacity:.9"></div><div class="a" style="left:1548px;top:812px;width:38px;height:38px;border-radius:50%;background:#fafafa"></div><div class="a" style="left:1551.0px;top:822.4px;width:6.9px;height:6.9px;background:#dde6e8"></div><div class="a" style="left:1551.0px;top:829.3px;width:6.9px;height:6.9px;background:#dfe6e6"></div><div class="a" style="left:1557.9px;top:822.4px;width:6.9px;height:6.9px;background:#dcdbe8"></div><div class="a" style="left:1557.9px;top:829.3px;width:6.9px;height:6.9px;background:#cfcde0"></div><div class="a" style="left:1564.8px;top:822.4px;width:6.9px;height:6.9px;background:#9684bd"></div><div class="a" style="left:1564.8px;top:829.3px;width:6.9px;height:6.9px;background:#9277c0"></div><div class="a" style="left:1564.8px;top:836.2px;width:6.9px;height:6.9px;background:#b5b1cf"></div><div class="a" style="left:1571.7px;top:808.6px;width:6.9px;height:6.9px;background:#eeefe2"></div><div class="a" style="left:1571.7px;top:815.5px;width:6.9px;height:6.9px;background:#c5c6a9"></div><div class="a" style="left:1571.7px;top:822.4px;width:6.9px;height:6.9px;background:#b9aed0"></div><div class="a" style="left:1571.7px;top:829.3px;width:6.9px;height:6.9px;background:#8f7cba"></div><div class="a" style="left:1571.7px;top:836.2px;width:6.9px;height:6.9px;background:#a3c3ad"></div><div class="a" style="left:1578.6px;top:829.3px;width:6.9px;height:6.9px;background:#ccccd8"></div><div class="a" style="left:1578.6px;top:836.2px;width:6.9px;height:6.9px;background:#eef5ee"></div><div class="a" style="left:1550.6px;top:856.4px;font-size:11.2px;line-height:16px;color:#1f1f1f">智能体</div><div class="a" style="left:1550.6px;top:857.4px;width:34.4px;height:3.4px;background:#b9b9b9"></div></div>
</body></html>
